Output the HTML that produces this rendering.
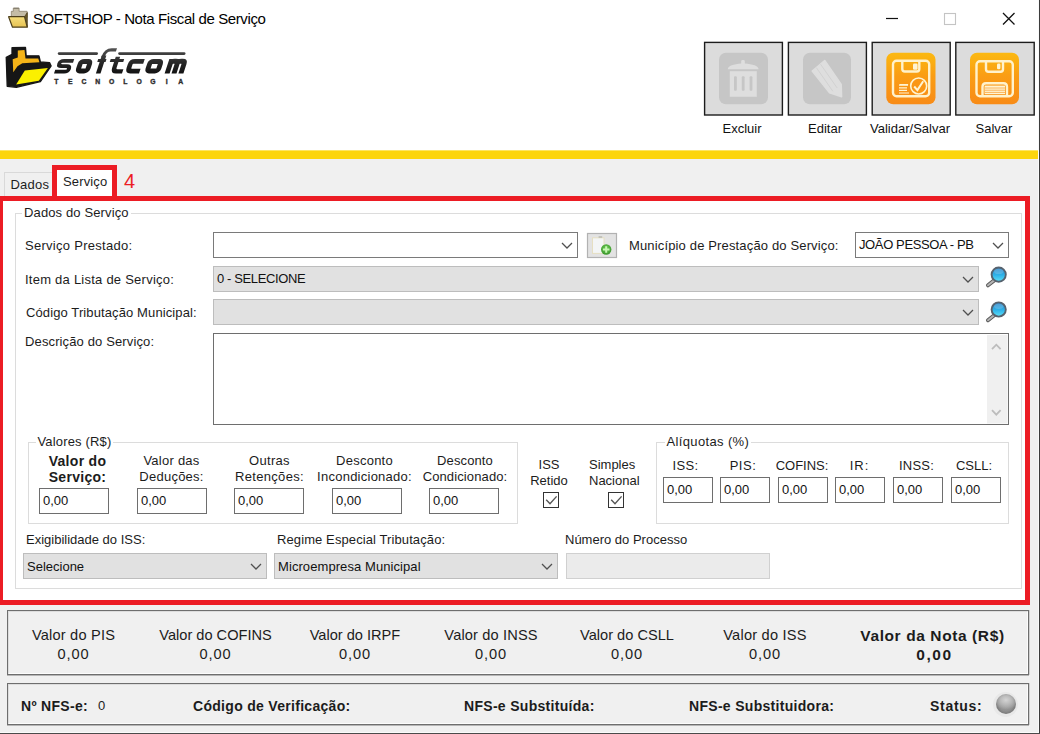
<!DOCTYPE html>
<html>
<head>
<meta charset="utf-8">
<title>SOFTSHOP - Nota Fiscal de Serviço</title>
<style>
*{box-sizing:border-box;margin:0;padding:0}
html,body{width:1040px;height:734px;overflow:hidden;background:#fff}
body{font-family:"Liberation Sans",sans-serif;font-size:13px;color:#1a1a1a;position:relative}
.abs{position:absolute}
.t{position:absolute;white-space:nowrap;line-height:16px;font-size:13px;color:#1c1c1c}
.c{text-align:center}
.b{font-weight:bold;font-size:14px;letter-spacing:.3px}
#titlebar{left:0;top:0;width:1040px;height:36px;background:#fff}
#title{left:33px;top:9px;font-size:15px;line-height:20px;color:#000;letter-spacing:-.4px}
#yellow{left:0;top:150px;width:1040px;height:9px;background:linear-gradient(#fde562 0,#fde562 1px,#fcd50c 1px)}
#body{left:0;top:159px;width:1040px;height:575px;background:#f0f0f0}
.tb{position:absolute;top:42px;width:80px;height:74px;background:#dcdcdc;border:2px solid #222}
.tbl{position:absolute;top:121px;width:100px;text-align:center;font-size:13px;line-height:16px;color:#111}
.combo{position:absolute;border:1px solid #7a7a7a;background:#fff;height:26px}
.combo.dis{background:#e1e1e1;border-color:#bdbdbd}
.combo .v{position:absolute;left:3px;top:4px;line-height:16px;font-size:13px;white-space:nowrap;color:#111}
.combo svg{position:absolute;right:4px;top:9px}
.inp{position:absolute;border:1px solid #6e6e6e;background:#fff;height:26px;font-size:13px;line-height:16px;padding:4px 0 0 3px;color:#111}
.gb{position:absolute;border:1px solid #dcdcdc}
.gbl{position:absolute;background:#fff;padding:0 2px;font-size:13px;line-height:16px;color:#1c1c1c;white-space:nowrap}
.big{font-size:14.600px;line-height:19px;letter-spacing:.15px}
.big.b{font-size:15.500px;letter-spacing:.6px}
.chk{position:absolute;width:16px;height:16px;border:1px solid #333;background:#fff}
</style>
</head>
<body>
<div id="titlebar" class="abs"></div>
<div id="title" class="t">SOFTSHOP - Nota Fiscal de Serviço</div>

<!-- toolbar buttons -->
<div class="tbl" style="left:692px">Excluir</div>
<div class="tbl" style="left:775px">Editar</div>
<div class="tbl" style="left:860px">Validar/Salvar</div>
<div class="tbl" style="left:944px">Salvar</div>


<!-- top area graphics: page-coordinate SVG -->
<svg class="abs" style="left:0;top:0" width="1040" height="151" viewBox="0 0 1040 151">
<defs>
<linearGradient id="og" x1="0" y1="0" x2="0" y2="1"><stop offset="0" stop-color="#fbb912"/><stop offset=".45" stop-color="#fa9d14"/><stop offset="1" stop-color="#f88b17"/></linearGradient>
<linearGradient id="lg" x1="0" y1="0" x2="1" y2="1"><stop offset="0" stop-color="#3a3a3a"/><stop offset="1" stop-color="#111"/></linearGradient>
<linearGradient id="fg" x1="0" y1="0" x2="0" y2="1"><stop offset="0" stop-color="#f6de7c"/><stop offset="1" stop-color="#e6c252"/></linearGradient>
</defs>
<!-- title icon (folder) -->
<g>
<path d="M11.300 11.300h2v-3.200h5.800v3.200h8v6h-15.800z" fill="#c4bca6" stroke="#8a826c" stroke-width=".8"/>
<path d="M13.600 8.300h5.200" stroke="#7a7468" stroke-width=".9"/>
<path d="M24.600 16.600L27.300 12.600V27.200z" fill="#6b5a2c" stroke="#4e401c" stroke-width=".8"/>
<path d="M8.600 16.700H24.500L27.200 27.200H12.500z" fill="url(#fg)" stroke="#4e401c" stroke-width="1.200" stroke-linejoin="round"/>
</g>
<!-- window controls -->
<path d="M886 18.5h12" stroke="#111" stroke-width="1.2"/>
<rect x="944.5" y="13.5" width="11" height="11" fill="none" stroke="#c4c4c4" stroke-width="1.1"/>
<path d="M1003 13l11.5 11.5M1014.5 13L1003 24.5" stroke="#111" stroke-width="1.3"/>
<!-- softcom logo: folder -->
<g transform="translate(0,40) scale(0.09615)">
<path d="M125 80L265 78L272 165L405 165L420 228L515 235L532 270L420 432L170 492L75 482L65 180L125 150Z" fill="#161616" stroke="#161616" stroke-width="14" stroke-linejoin="round"/>
<path d="M185 110L255 105L265 192L398 192L410 232L232 242L182 272L138 335L132 200L185 182Z" fill="#f5b418"/>
<path d="M258 316L498 290L404 424L168 464Z" fill="#fbf000"/>
</g>
<!-- softcom logo: text -->
<defs><linearGradient id="lg2" gradientUnits="userSpaceOnUse" x1="0" y1="-24" x2="0" y2="0"><stop offset="0" stop-color="#505050"/><stop offset=".5" stop-color="#2a2a2a"/><stop offset="1" stop-color="#121212"/></linearGradient></defs>
<rect x="57.800" y="52.300" width="40.200" height="2.600" rx="1.300" fill="#3e3e3e"/>
<rect x="118.200" y="52.300" width="67.300" height="2.600" rx="1.300" fill="#3e3e3e"/>
<g transform="translate(0,73.500) skewX(-18)" fill="none" stroke="url(#lg2)" stroke-width="4.800" stroke-linejoin="round">
<path d="M69.500 -12.700H59.400Q56 -12.700 56 -10Q56 -7.300 59.400 -7.300H64.100Q67.500 -7.300 67.500 -4.600Q67.500 -1.900 64.100 -1.900H54" stroke-width="3.800"/>
<rect x="77" y="-12.100" width="9.400" height="9.600" rx="2.500" stroke-width="5"/>
<path d="M98.200 0V-18" stroke-width="4.600"/>
<path d="M97.600 -16.500Q97.800 -23.600 103.500 -23.600H108.800" stroke-width="3.400"/>
<path d="M93.500 -13H101.800" stroke-width="2.800"/>
<path d="M112.500 -16.800V-5.500Q112.500 -2.100 116 -2.100H122" stroke-width="4.400"/>
<path d="M106 -13H119.500" stroke-width="3"/>
<path d="M140 -12.200H130.200Q127.200 -12.200 127.200 -9.200V-5.400Q127.200 -2.400 130.200 -2.400H139"/>
<rect x="146.450" y="-12.100" width="10.750" height="9.600" rx="2.500" stroke-width="5"/>
<path d="M167.100 0V-14.600M167.100 -9.500Q167.100 -12.200 170 -12.200H171.200Q174 -12.200 174 -9.500V0M174 -9.500Q174 -12.200 176.800 -12.200H178.100Q180.900 -12.200 180.900 -9.500V0" stroke-width="5"/>
</g>
<g font-family="Liberation Sans" font-weight="bold" font-size="6.800" fill="#2e2e2e" stroke="#2e2e2e" stroke-width=".35"><text x="56.4" y="84.300" text-anchor="middle">T</text><text x="70.2" y="84.300" text-anchor="middle">E</text><text x="84.0" y="84.300" text-anchor="middle">C</text><text x="97.8" y="84.300" text-anchor="middle">N</text><text x="111.6" y="84.300" text-anchor="middle">O</text><text x="125.4" y="84.300" text-anchor="middle">L</text><text x="139.2" y="84.300" text-anchor="middle">O</text><text x="153.0" y="84.300" text-anchor="middle">G</text><text x="166.8" y="84.300" text-anchor="middle">I</text><text x="180.6" y="84.300" text-anchor="middle">A</text></g>
<!-- toolbar buttons -->
<g fill="#dcdcdc" stroke="#1c1c1c" stroke-width="1.4">
<rect x="704.6" y="42.4" width="77.8" height="72.6"/>
<rect x="788.4" y="42.4" width="78" height="72.6"/>
<rect x="872.2" y="42.4" width="78" height="72.6"/>
<rect x="955.8" y="42.4" width="78.4" height="72.6"/>
</g>
<!-- Excluir icon -->
<rect x="719" y="52.7" width="49" height="51.5" rx="7" fill="#c6c6c6"/>
<g fill="#dedede">
<path d="M727.8 69.2c0-3.2 6-5.2 13.4-5.7v-2.6c0-1.2 3.6-1.2 3.6 0v2.6c7.6.5 13.8 2.500 13.800 5.700z"/>
<path d="M729.800 71.200h27v25.600h-27z"/>
</g>
<g fill="#c6c6c6"><rect x="734" y="76.200" width="2.800" height="14.600" rx="1"/><rect x="741.800" y="76.200" width="2.800" height="14.600" rx="1"/><rect x="749.600" y="76.200" width="2.800" height="14.600" rx="1"/></g>
<!-- Editar icon -->
<rect x="803" y="52.700" width="48" height="51.500" rx="7" fill="#c6c6c6"/>
<path d="M812.200 71L824.700 60.500L841.200 84.500L841.600 96.800L829.500 92.700Z" fill="#dedede" stroke="#dedede" stroke-width="1.500" stroke-linejoin="round"/>
<path d="M816.300 67.600L832.800 91.200M820.500 64.200L837.200 88" stroke="#d2d2d2" stroke-width="1"/>
<!-- Validar/Salvar icon -->
<rect x="886.300" y="52.700" width="49.200" height="51.600" rx="7" fill="url(#og)"/>
<g fill="none" stroke="#fff2cc" stroke-width="2.400">
<rect x="893" y="60.700" width="36.200" height="35.600" rx="3.500"/>
<path d="M902.300 60.700v8.300q0 2.500 2.500 2.500h12q2.500 0 2.500-2.500v-8.300"/>
</g>
<rect x="913" y="63.500" width="4.600" height="6.300" rx="1.200" fill="#fff4d2"/>
<g stroke="#fff4d2" stroke-width="1.200" fill="none"><path d="M899 85.200h9M899 87.800h8M899 90.400h8M899 93h10"/><path d="M899.600 84.600h8.500"/></g>
<circle cx="918.700" cy="86" r="8" fill="#fa9716" stroke="#fff4d2" stroke-width="1.600"/>
<path d="M914.200 86.500l3.200 3.600 5.800-8.800" fill="none" stroke="#fff4d2" stroke-width="2"/>
<!-- Salvar icon -->
<rect x="970" y="52.700" width="49" height="51.600" rx="7" fill="url(#og)"/>
<g fill="none" stroke="#fff2cc" stroke-width="2.400">
<rect x="976.500" y="61.200" width="36.300" height="35" rx="3.500"/>
<path d="M986 61.200v8q0 2.500 2.500 2.500h12q2.500 0 2.500-2.500v-8"/>
<path d="M982.500 96.200v-9.500q0-3.500 3.500-3.500h17.500q3.500 0 3.500 3.500v9.500"/>
</g>
<rect x="997" y="63.500" width="3.400" height="5.800" rx="1.200" fill="#fff4d2"/>
<rect x="984.600" y="85.600" width="20.400" height="8.600" fill="#fff4d2"/>
<path d="M985 88h20M985 90.200h20M985 92.400h20" stroke="#f9a13a" stroke-width=".8"/>
<!-- window right/bottom edge -->
</svg>

<div id="yellow" class="abs"></div>
<div id="body" class="abs"></div>

<!-- tabs -->
<div class="abs" style="left:4px;top:172px;width:49px;height:24px;border:1px solid #d9d9d9;border-bottom:none;background:#f0f0f0"></div>
<div class="t" style="left:10.500px;top:177px;letter-spacing:.2px">Dados</div>
<div class="abs" style="left:52px;top:165px;width:65px;height:36px;border:5px solid #ec1c24;background:#fff"></div>
<div class="t" style="left:63px;top:174px;letter-spacing:.15px">Serviço</div>
<div class="t" style="left:124px;top:170px;font-size:20px;line-height:22px;color:#ec1c24">4</div>

<!-- tab page -->
<div class="abs" style="left:-2px;top:196px;width:1032px;height:409px;border:5px solid #ec1c24;background:#fff"></div>

<!-- Dados do Servico group -->
<div class="gb" style="left:15px;top:213px;width:1007px;height:376px"></div>
<div class="gbl" style="left:22px;top:205px;letter-spacing:.13px">Dados do Serviço</div>

<div class="t" style="left:25px;top:238px;letter-spacing:.28px">Serviço Prestado:</div>
<div class="t" style="left:25px;top:272px;letter-spacing:.24px">Item da Lista de Serviço:</div>
<div class="t" style="left:26px;top:305px;letter-spacing:.11px">Código Tributação Municipal:</div>
<div class="t" style="left:25px;top:334px;letter-spacing:.13px">Descrição do Serviço:</div>

<div class="combo" style="left:213px;top:232px;width:365px"><svg width="12" height="7" viewBox="0 0 12 7"><path d="M1 1l5 5 5-5" fill="none" stroke="#505050" stroke-width="1.250"/></svg></div>
<div class="combo dis" style="left:213px;top:266px;width:766px"><div class="v" style="letter-spacing:-.38px">0 - SELECIONE</div><svg width="12" height="7" viewBox="0 0 12 7"><path d="M1 1l5 5 5-5" fill="none" stroke="#505050" stroke-width="1.250"/></svg></div>
<div class="combo dis" style="left:213px;top:299px;width:766px"><svg width="12" height="7" viewBox="0 0 12 7"><path d="M1 1l5 5 5-5" fill="none" stroke="#505050" stroke-width="1.250"/></svg></div>
<div class="abs" style="left:213px;top:333px;width:796px;height:92px;border:1px solid #6e6e6e;background:#fff"></div>

<div class="t" style="left:629px;top:238px;letter-spacing:.15px">Município de Prestação do Serviço:</div>
<div class="combo" style="left:855px;top:232px;width:154px"><div class="v" style="letter-spacing:-.38px">JOÃO PESSOA - PB</div><svg width="12" height="7" viewBox="0 0 12 7"><path d="M1 1l5 5 5-5" fill="none" stroke="#505050" stroke-width="1.250"/></svg></div>


<!-- form graphics: page-coordinate SVG -->
<svg class="abs" style="left:0;top:225px" width="1040" height="210" viewBox="0 225 1040 210">
<defs>
<linearGradient id="lens" x1="0" y1="0" x2="0" y2="1"><stop offset="0" stop-color="#2a7fc4"/><stop offset=".55" stop-color="#2fb4ea"/><stop offset="1" stop-color="#5fe0f6"/></linearGradient>
<radialGradient id="grn" cx=".5" cy=".4" r=".6"><stop offset="0" stop-color="#6fcf55"/><stop offset="1" stop-color="#3a962c"/></radialGradient>
</defs>
<!-- add button -->
<rect x="587.500" y="233.500" width="29" height="24" fill="#e3e3e3" stroke="#b2b2b2" stroke-width="1.200"/>
<rect x="592.500" y="237.800" width="11.500" height="15.600" fill="#f3f5f6" stroke="#e6dfc2" stroke-width="1"/>
<rect x="598.600" y="236.200" width="3.600" height="1.600" fill="#bdbdb5"/>
<circle cx="606.200" cy="249.500" r="5.200" fill="url(#grn)"/>
<path d="M606.200 246.200v6.600M602.900 249.500h6.600" stroke="#c6f7b4" stroke-width="2"/>
<!-- search icons -->
<g id="mag">
<path d="M994.200 280.400L988 285.300" stroke="#5a5a5a" stroke-width="4" stroke-linecap="round"/>
<path d="M994.200 280.400L988 285.300" stroke="#b4b4b4" stroke-width="2" stroke-linecap="round"/>
<circle cx="998.700" cy="274.600" r="7.100" fill="url(#lens)" stroke="#56626e" stroke-width="1.900"/>
<ellipse cx="998.700" cy="271.400" rx="4.600" ry="2.600" fill="#fff" opacity=".18"/>
</g>
<use href="#mag" transform="translate(0,34.900)"/>
<!-- textarea scrollbar -->
<rect x="987" y="335" width="20.500" height="88.500" fill="#f0f0f0"/>
<path d="M992 349.200l4.300-4.500 4.300 4.500M992 410.200l4.300 4.500 4.300-4.500" fill="none" stroke="#bdbdbd" stroke-width="1.800"/>
</svg>

<!-- Valores group -->
<div class="gb" style="left:28px;top:442px;width:490px;height:82px"></div>
<div class="gbl" style="left:35.500px;top:434px;letter-spacing:.16px">Valores (R$)</div>
<div class="t c b" style="left:27.500px;width:100px;top:453px">Valor do<br>Serviço:</div>
<div class="t c" style="left:121.500px;width:100px;top:453px;letter-spacing:.25px">Valor das<br>Deduções:</div>
<div class="t c" style="left:219.500px;width:100px;top:453px;letter-spacing:.3px">Outras<br>Retenções:</div>
<div class="t c" style="left:304.500px;width:120px;top:453px;letter-spacing:.25px">Desconto<br>Incondicionado:</div>
<div class="t c" style="left:405px;width:120px;top:453px;letter-spacing:.12px">Desconto<br>Condicionado:</div>
<div class="inp" style="left:39px;top:488px;width:70px">0,00</div>
<div class="inp" style="left:137px;top:488px;width:70px">0,00</div>
<div class="inp" style="left:234px;top:488px;width:70px">0,00</div>
<div class="inp" style="left:332px;top:488px;width:70px">0,00</div>
<div class="inp" style="left:429px;top:488px;width:70px">0,00</div>

<div class="t c" style="left:509px;width:80px;top:457px">ISS<br>Retido</div>
<div class="t" style="left:589px;top:457px">Simples<br>Nacional</div>
<div class="chk" style="left:543px;top:492px"><svg width="14" height="14" viewBox="0 0 14 14"><path d="M2.200 6.800l3.800 4L12.600 3.400" fill="none" stroke="#555" stroke-width="1.400"/></svg></div>
<div class="chk" style="left:608px;top:492px"><svg width="14" height="14" viewBox="0 0 14 14"><path d="M2.200 6.800l3.800 4L12.600 3.400" fill="none" stroke="#555" stroke-width="1.400"/></svg></div>

<!-- Aliquotas group -->
<div class="gb" style="left:656px;top:442px;width:353px;height:82px"></div>
<div class="gbl" style="left:664.500px;top:434px;letter-spacing:.36px">Alíquotas (%)</div>
<div class="t c" style="left:645.500px;width:80px;top:458px;letter-spacing:.4px">ISS:</div>
<div class="t c" style="left:703px;width:80px;top:458px;letter-spacing:.5px">PIS:</div>
<div class="t c" style="left:762px;width:80px;top:458px">COFINS:</div>
<div class="t c" style="left:819.500px;width:80px;top:458px;letter-spacing:.9px">IR:</div>
<div class="t c" style="left:876.500px;width:80px;top:458px;letter-spacing:.25px">INSS:</div>
<div class="t c" style="left:934px;width:80px;top:458px">CSLL:</div>
<div class="inp" style="left:663px;top:477px;width:50px">0,00</div>
<div class="inp" style="left:720px;top:477px;width:50px">0,00</div>
<div class="inp" style="left:778px;top:477px;width:50px">0,00</div>
<div class="inp" style="left:835px;top:477px;width:50px">0,00</div>
<div class="inp" style="left:893px;top:477px;width:50px">0,00</div>
<div class="inp" style="left:951px;top:477px;width:50px">0,00</div>

<!-- last row -->
<div class="t" style="left:26px;top:532px">Exigibilidade do ISS:</div>
<div class="t" style="left:277px;top:532px;letter-spacing:.1px">Regime Especial Tributação:</div>
<div class="t" style="left:565px;top:532px">Número do Processo</div>
<div class="combo dis" style="left:23px;top:553px;width:244px"><div class="v" style="top:5px">Selecione</div><svg width="12" height="7" viewBox="0 0 12 7"><path d="M1 1l5 5 5-5" fill="none" stroke="#505050" stroke-width="1.250"/></svg></div>
<div class="combo dis" style="left:274px;top:553px;width:284px"><div class="v" style="top:5px;letter-spacing:.08px">Microempresa Municipal</div><svg width="12" height="7" viewBox="0 0 12 7"><path d="M1 1l5 5 5-5" fill="none" stroke="#505050" stroke-width="1.250"/></svg></div>
<div class="abs" style="left:566px;top:553px;width:204px;height:26px;border:1px solid #d0d0d0;background:#ebebeb"></div>

<!-- bottom panels -->
<div class="abs" style="left:7px;top:610px;width:1022px;height:65px;border:1px solid #6e6e6e;box-shadow:0 1px 0 rgba(110,110,110,.45),1px 0 0 rgba(110,110,110,.25),inset 1px 1px 0 rgba(0,0,0,.08),inset -1px -1px 0 rgba(255,255,255,.8);background:#f0f0f0"></div>
<div class="abs" style="left:7px;top:683px;width:1022px;height:42px;border:1px solid #6e6e6e;box-shadow:0 1px 0 rgba(110,110,110,.45),1px 0 0 rgba(110,110,110,.25),inset 1px 1px 0 rgba(0,0,0,.08),inset -1px -1px 0 rgba(255,255,255,.8);background:#f0f0f0"></div>
<div class="t c big" style="left:-6.500px;width:160px;top:626px;letter-spacing:.19px">Valor do PIS<br><span style="letter-spacing:.85px">0,00</span></div>
<div class="t c big" style="left:135.500px;width:160px;top:626px;letter-spacing:0">Valor do COFINS<br><span style="letter-spacing:.85px">0,00</span></div>
<div class="t c big" style="left:275px;width:160px;top:626px;letter-spacing:0">Valor do IRPF<br><span style="letter-spacing:.85px">0,00</span></div>
<div class="t c big" style="left:411px;width:160px;top:626px">Valor do INSS<br><span style="letter-spacing:.85px">0,00</span></div>
<div class="t c big" style="left:547px;width:160px;top:626px;letter-spacing:.01px">Valor do CSLL<br><span style="letter-spacing:.85px">0,00</span></div>
<div class="t c big" style="left:685px;width:160px;top:626px;letter-spacing:.22px">Valor do ISS<br><span style="letter-spacing:.85px">0,00</span></div>
<div class="t c big b" style="left:842.500px;width:180px;top:626px">Valor da Nota (R$)<br><span style="letter-spacing:1.600px;padding-left:4px">0,00</span></div>

<div class="t b" style="left:21px;top:698px">Nº NFS-e:</div>
<div class="t" style="left:98px;top:698px">0</div>
<div class="t b" style="left:193px;top:698px">Código de Verificação:</div>
<div class="t b" style="left:464px;top:698px">NFS-e Substituída:</div>
<div class="t b" style="left:689px;top:698px">NFS-e Substituidora:</div>
<div class="t b" style="left:930px;top:698px;letter-spacing:.7px">Status:</div>
<div class="abs" style="left:993px;top:691.500px;width:25px;height:25px;border-radius:50%;background:radial-gradient(circle at 50% 50%,#e8e8e8 0,#e8e8e8 80%,#e2e2e2 88%,rgba(240,240,240,0) 100%)"></div><div class="abs" style="left:995.500px;top:694px;width:20px;height:20px;border-radius:50%;background:radial-gradient(ellipse 62% 48% at 50% 30%,#d4d4d4 0,#bdbdbd 40%,rgba(160,160,160,0) 100%),radial-gradient(circle at 50% 50%,#a0a0a0 0,#909090 50%,#6c6c6c 82%,#5c5c5c 100%)"></div>

<div class="abs" style="left:1038px;top:0;width:1px;height:734px;background:#fafafa"></div>
<div class="abs" style="left:0;top:732px;width:1040px;height:1px;background:#fafafa"></div>
<div class="abs" style="left:1039px;top:0;width:1px;height:734px;background:#3c3c3c"></div>
<div class="abs" style="left:0;top:733px;width:1040px;height:1px;background:#4a4a4a"></div>
</body>
</html>
